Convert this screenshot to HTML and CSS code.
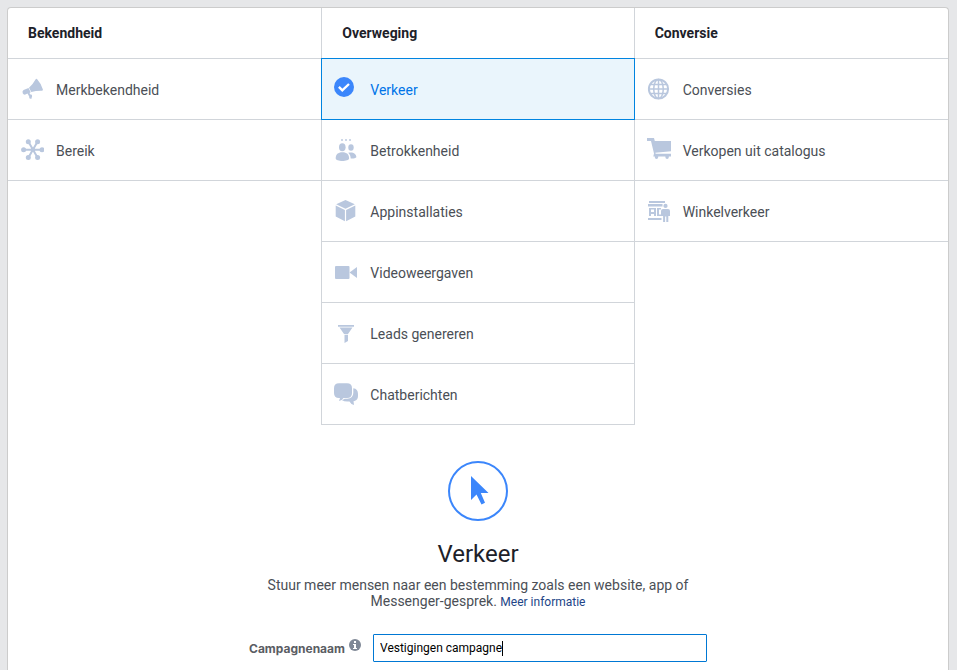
FILE: index.html
```html
<!DOCTYPE html>
<html lang="nl">
<head>
    <meta charset="UTF-8">
    <meta name="viewport" content="width=device-width, initial-scale=1.0">
    <title>Campagnedoelstelling</title>
    <link rel="stylesheet" href="styles.css">
</head>
<body>
    <main class="card">
        <div class="objectives">
            <section class="column">
                <h2>Bekendheid</h2>
                <button type="button" class="objective">
                    <svg class="icon" viewBox="0 0 24 24" aria-hidden="true">
                        <path d="M15.500 2.400q1-1.100 1.900 0Q21.500 7 22.900 12.500q.2 1-.8 1.200-5.600-.2-10.800 1.300L9 10.700Q12.700 7.500 15.500 2.400z"/>
                        <path d="M8.500 11.100l2.200 4.200-1.300.8 1 1.300 1.400.3.300 1.600-.8 2.800-2-.9-.1-1.800-1.700-2.800-2.200 1q-1.900.3-2.600-1.300-.7-2.100.9-3.200z"/>
                    </svg>
                    <span>Merkbekendheid</span>
                </button>
                <button type="button" class="objective">
                    <svg class="icon" viewBox="0 0 24 24" aria-hidden="true">
                        <path class="line" d="M3.500 11.700h19M8.300 3.500l9.300 16.300M17.600 3.500L8.300 19.800"/>
                        <circle cx="3.600" cy="11.700" r="2.500"/>
                        <circle cx="22" cy="11.700" r="2.500"/>
                        <circle cx="8.300" cy="3.700" r="2.500"/>
                        <circle cx="17.600" cy="3.700" r="2.500"/>
                        <circle cx="8.300" cy="19.600" r="2.500"/>
                        <circle cx="17.600" cy="19.600" r="2.500"/>
                        <circle cx="12.900" cy="11.700" r="2.300"/>
                    </svg>
                    <span>Bereik</span>
                </button>
            </section>

            <section class="column middle">
                <h2>Overweging</h2>
                <button type="button" class="objective selected" aria-pressed="true">
                    <svg class="icon" viewBox="0 0 24 24" aria-hidden="true">
                        <circle class="blue" cx="10" cy="10" r="10"/>
                        <path class="check" d="M4.900 9.900l3.400 3.400 6.700-6.300"/>
                    </svg>
                    <span>Verkeer</span>
                </button>
                <button type="button" class="objective">
                    <svg class="icon" viewBox="0 0 24 24" aria-hidden="true">
                        <path class="faint" d="M7 1h2v2H7zM11 1h2v2h-2zM15 1h2v2h-2z"/>
                        <ellipse cx="8.300" cy="9.300" rx="3.300" ry="4"/>
                        <ellipse cx="17" cy="9.500" rx="2.700" ry="3.200"/>
                        <path d="M1.700 20.500c0-4 2.200-6.200 6.700-6.200s6.700 2.200 6.700 6.200c0 3.300-13.400 3.300-13.400 0z"/>
                        <path d="M14.200 14.700c4.500-1 8.100.6 8.200 4.500-1 1.200-3.500 1.400-5.700 1.200-.1-2.500-.8-4.300-2.500-5.700z"/>
                    </svg>
                    <span>Betrokkenheid</span>
                </button>
                <button type="button" class="objective">
                    <svg class="icon" viewBox="0 0 24 24" aria-hidden="true">
                        <path d="M11.500 1l9.300 4.300-9.300 4.500-9.300-4.500z"/>
                        <path d="M1.700 6.500l9.200 4.500v11.200l-9.200-4.700zM21.300 6.500L12.100 11v11.200l9.200-4.700z"/>
                    </svg>
                    <span>Appinstallaties</span>
                </button>
                <button type="button" class="objective">
                    <svg class="icon" viewBox="0 0 24 24" aria-hidden="true">
                        <rect x="1" y="6" width="14.500" height="13" rx="1"/>
                        <path d="M15.500 12.500L23 7v11z"/>
                    </svg>
                    <span>Videoweergaven</span>
                </button>
                <button type="button" class="objective">
                    <svg class="icon" viewBox="0 0 24 24" aria-hidden="true">
                        <path d="M4 4h16v1.700H4zM5.500 6.500h13L14 13h-4zM10.500 13.800H14V20l-3.500 2z"/>
                    </svg>
                    <span>Leads genereren</span>
                </button>
                <button type="button" class="objective">
                    <svg class="icon" viewBox="0 0 24 24" aria-hidden="true">
                        <path d="M5 1.300h8q5 0 5 5V11q0 5-5 5H9.500Q8 18.500 5 19l1-3H5q-5 0-5-5V6.300q0-5 5-5z"/>
                        <path d="M19.300 6.300Q24 7 24 12v2q0 4-3.500 5l-1 .3.500 3.700q-3-.5-4.500-3.500-5 .5-7.800-1.500 2-.2 3-1.200h2.500q6.100-.5 6.100-6z"/>
                    </svg>
                    <span>Chatberichten</span>
                </button>
            </section>

            <section class="column">
                <h2>Conversie</h2>
                <button type="button" class="objective">
                    <svg class="icon" viewBox="0 0 24 24" aria-hidden="true">
                        <circle class="line" cx="11.500" cy="12" r="9.600"/>
                        <path class="thin" d="M11.500 2v20M2 12h19M3.500 7.500h16M3.500 16.500h16"/>
                        <ellipse class="thin" cx="11.500" cy="12" rx="4.800" ry="9.500"/>
                    </svg>
                    <span>Conversies</span>
                </button>
                <button type="button" class="objective">
                    <svg class="icon" viewBox="0 0 24 24" aria-hidden="true">
                        <path d="M0 0h7l.8 3H24v10.200L8.300 14.700l.4 1.100H24v2.700h-2.200v.7a1.700 1.700 0 0 1-3.400 0v-.7h-7.200v.7a1.700 1.700 0 0 1-3.400 0v-.7H6.300L7 15.500 4 3H0z"/>
                    </svg>
                    <span>Verkopen uit catalogus</span>
                </button>
                <button type="button" class="objective">
                    <svg class="icon" viewBox="0 0 24 24" aria-hidden="true">
                        <path d="M2 2h16v2H2zM1 5h14.500v2.500H1zM1 19h13.500v2H1zM2 9h2v8H2zM4 9h4v1.500H4zM4 13h4v2H4zM7 9h2v8H7zM10 9h2v6.500h2V17h-4zM12 9h2v1.500h-2z"/>
                        <circle cx="18.500" cy="6.900" r="2.100"/>
                        <path d="M16 10h5q2 0 2 2v5h-1.700v6h-2v-5.500h-1.200V23h-2v-6H14v-5q0-2 2-2z"/>
                    </svg>
                    <span>Winkelverkeer</span>
                </button>
            </section>
        </div>

        <section class="details">
            <svg class="badge" viewBox="0 0 60 60" aria-hidden="true">
                <circle cx="30" cy="30" r="29"/>
                <path d="M23 15v24l5.500-5.500L33.500 43.500l3.500-1.700L32.800 32H40.500z"/>
            </svg>
            <h1>Verkeer</h1>
            <p>Stuur meer mensen naar een bestemming zoals een website, app of<br>Messenger-gesprek. <a href="#">Meer informatie</a></p>
            <form class="campaign">
                <label for="campaign-name">Campagnenaam</label>
                <svg class="info" viewBox="0 0 12 12" aria-hidden="true">
                    <circle cx="6" cy="6" r="6"/>
                    <path d="M5 2h2v2H5zM4 5h3v4h1v1H4V9h1V6H4z"/>
                </svg>
                <div class="field">
                    <input type="text" id="campaign-name" value="Vestigingen campagne">
                    <span class="caret"></span>
                </div>
            </form>
        </section>
    </main>
</body>
</html>
```
FILE: styles.css
```css
* {
    box-sizing: border-box;
}

body {
    margin: 0;
    padding: 7px 8px 0 7px;
    background: #e6e7e9;
    color: #4b4f56;
    font-family: Roboto, Arial, sans-serif;
    font-size: 14px;
}

.card {
    min-height: calc(100vh - 7px);
    background: #fff;
    border: 1px solid #ccc;
    border-bottom: none;
    border-radius: 4px 4px 0 0;
    padding-bottom: 7px;
}

.objectives {
    display: grid;
    grid-template-columns: repeat(3, 1fr);
    align-items: start;
}

.middle {
    border: 1px solid #d1d5da;
    border-width: 0 1px;
}

.column h2 {
    margin: 0;
    padding: 0 20px;
    border-bottom: 1px solid #d1d5da;
    color: #1d2129;
    font-size: 14px;
    font-weight: bold;
    line-height: 50px;
}

.objective {
    display: flex;
    align-items: center;
    gap: 12px;
    width: 100%;
    height: 61px;
    padding: 2px 12px 0;
    background: none;
    border: none;
    border-bottom: 1px solid #d1d5da;
    color: #4b4f56;
    font: inherit;
    text-align: left;
    cursor: pointer;
}

/* covers the grid lines around the row */
.objective.selected {
    width: calc(100% + 2px);
    height: 62px;
    margin: -1px -1px 0;
    background: #eaf5fc;
    border: 1px solid #0084e0;
    color: #0074e8;
}

.icon {
    flex: none;
    width: 24px;
    height: 24px;
    margin-top: -2px;
    fill: #b9c7de;
}

.icon .line {
    fill: none;
    stroke: #b9c7de;
    stroke-width: 2;
}

.icon .thin {
    fill: none;
    stroke: #b9c7de;
    stroke-width: 1.5;
}

.icon .faint {
    opacity: 0.7;
}

.icon .blue {
    fill: #3b86fb;
}

.icon .check {
    fill: none;
    stroke: #fff;
    stroke-width: 2.4;
}

.details {
    display: flex;
    flex-direction: column;
    align-items: center;
    padding-top: 36px;
}

.badge {
    width: 60px;
    height: 60px;
    fill: #3b86fb;
}

.badge circle {
    fill: none;
    stroke: #3b86fb;
    stroke-width: 2;
}

.details h1 {
    margin: 18px 0 8px;
    color: #1d2129;
    font-size: 24px;
    font-weight: normal;
    line-height: 30px;
}

.details p {
    max-width: 440px;
    margin: 0 0 24px;
    line-height: 16px;
    text-align: center;
}

.details a {
    color: #224587;
    font-size: 12px;
    text-decoration: none;
}

.campaign {
    display: flex;
    align-items: center;
    font-size: 12px;
}

.campaign label {
    color: #5a5d63;
    font-family: Inter, Arial, sans-serif;
    font-weight: bold;
}

.info {
    width: 12px;
    height: 12px;
    margin: 0 12px 6px 4px;
    fill: #7f8896;
}

.info path {
    fill: #fff;
}

.field {
    position: relative;
}

.field input {
    display: block;
    width: 334px;
    max-width: 100%;
    height: 28px;
    padding: 0 6px;
    border: 1px solid #0078d4;
    border-radius: 1px;
    color: #000;
    font: inherit;
    outline: none;
}

.caret {
    position: absolute;
    top: 7px;
    left: 129px;
    width: 1px;
    height: 15px;
    background: #000;
}
```
